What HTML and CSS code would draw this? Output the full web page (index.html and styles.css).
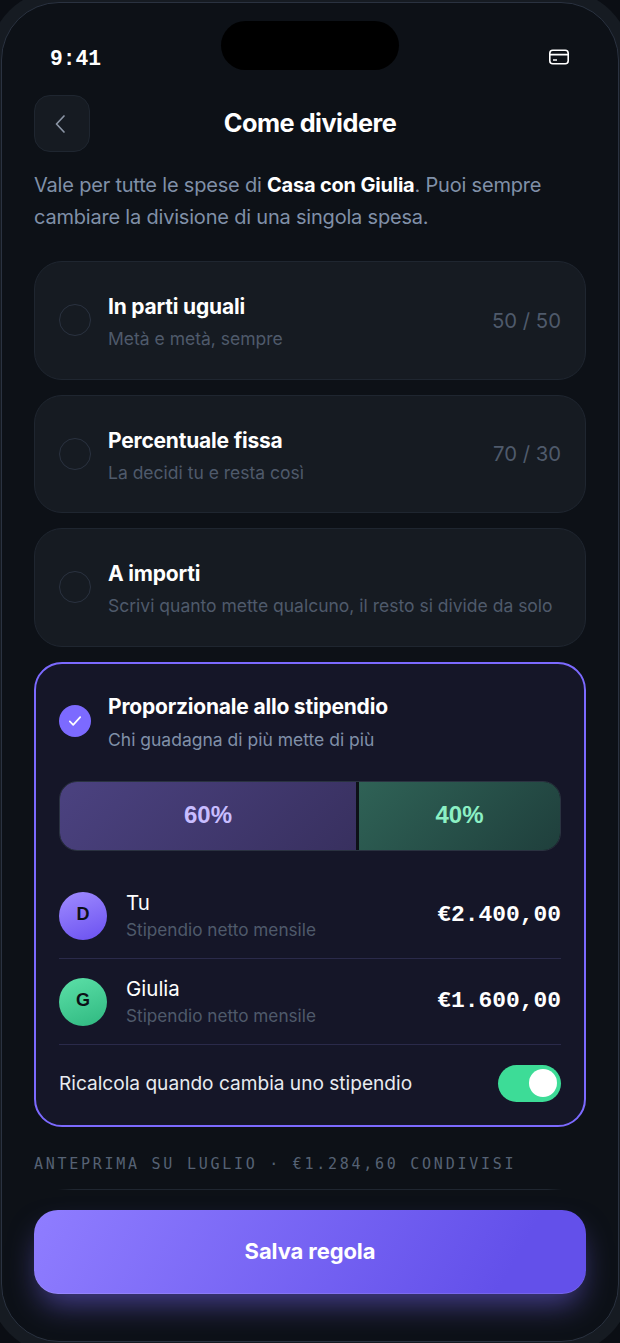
FILE: index.html
```html
<!DOCTYPE html>
<html lang="it">
    <head>
        <meta charset="utf-8">
        <title>Come dividere</title>
        <link rel="stylesheet" href="styles.css">
    </head>
    <body>
        <div class="screen">
            <div class="island"></div>
            <div class="status">
                <span class="time">9:41</span>
                <svg class="card-icon" width="22" height="16" viewBox="0 0 22 16" fill="none" stroke="#fff" stroke-width="1.6">
                    <rect x="1.8" y="1.3" width="18.4" height="13.4" rx="3"/>
                    <path d="M2 5.6h18"/>
                    <path d="M5 11h4"/>
                </svg>
            </div>
            <div class="nav">
                <div class="back">
                    <svg width="12" height="20" viewBox="0 0 12 20" fill="none" stroke="#8b95a5" stroke-width="1.7" stroke-linecap="round" stroke-linejoin="round"><path d="M10 2 2.5 10l7.5 8"/></svg>
                </div>
                <h1>Come dividere</h1>
            </div>
            <p class="intro">Vale per tutte le spese di <b>Casa con Giulia</b>. Puoi sempre cambiare la divisione di una singola spesa.</p>

            <div class="option">
                <span class="radio"></span>
                <div class="option-text">
                    <div class="option-title">In parti uguali</div>
                    <div class="option-sub">Metà e metà, sempre</div>
                </div>
                <span class="ratio">50 / 50</span>
            </div>
            <div class="option">
                <span class="radio"></span>
                <div class="option-text">
                    <div class="option-title">Percentuale fissa</div>
                    <div class="option-sub">La decidi tu e resta così</div>
                </div>
                <span class="ratio">70 / 30</span>
            </div>
            <div class="option">
                <span class="radio"></span>
                <div class="option-text">
                    <div class="option-title">A importi</div>
                    <div class="option-sub">Scrivi quanto mette qualcuno, il resto si divide da solo</div>
                </div>
            </div>

            <div class="selected">
                <div class="selected-head">
                    <span class="radio checked">
                        <svg width="14" height="12" viewBox="0 0 14 12" fill="none" stroke="#fff" stroke-width="1.7" stroke-linecap="round" stroke-linejoin="round"><path d="M1.8 6.4 5.2 9.8 12.2 2.2"/></svg>
                    </span>
                    <div class="option-text">
                        <div class="option-title">Proporzionale allo stipendio</div>
                        <div class="option-sub light">Chi guadagna di più mette di più</div>
                    </div>
                </div>
                <div class="split">
                    <div class="split-a">60%</div>
                    <div class="split-b">40%</div>
                </div>
                <div class="person">
                    <span class="avatar violet">D</span>
                    <div class="person-text">
                        <div class="person-name">Tu</div>
                        <div class="person-sub">Stipendio netto mensile</div>
                    </div>
                    <span class="amount">€2.400,00</span>
                </div>
                <div class="person">
                    <span class="avatar green">G</span>
                    <div class="person-text">
                        <div class="person-name">Giulia</div>
                        <div class="person-sub">Stipendio netto mensile</div>
                    </div>
                    <span class="amount">€1.600,00</span>
                </div>
                <div class="recalc">
                    <span>Ricalcola quando cambia uno stipendio</span>
                    <span class="toggle"><span class="knob"></span></span>
                </div>
            </div>

            <div class="preview">ANTEPRIMA SU LUGLIO · €1.284,60 CONDIVISI</div>
            <div class="preview-line"></div>
            <div class="save">Salva regola</div>
        </div>
    </body>
</html>
```

FILE: styles.css
```css
html, body {
    margin: 0;
    height: 100%;
    background-color: #0b0e14;
}
body {
    font-family: "Inter", "Noto Sans", sans-serif;
    overflow: hidden;
}
.screen {
    position: relative;
    box-sizing: border-box;
    width: 618px;
    height: 1340px;
    margin: 2px 1px 0;
    padding: 0 32px;
    border: 1px solid #2a3240;
    border-radius: 58px;
    background-color: #0d1117;
    box-shadow: 0 0 0 12px #161b22;
    overflow: hidden;
}
.island {
    position: absolute;
    top: 18px;
    left: 219px;
    width: 178px;
    height: 49px;
    border-radius: 25px;
    background-color: #000;
}
.status {
    display: flex;
    align-items: center;
    justify-content: space-between;
    height: 29px;
    padding: 41px 16px 0 16px;
}
.time {
    font-family: "Liberation Mono", monospace;
    font-weight: 700;
    font-size: 21.3px;
    color: #fff;
}
.card-icon {
    margin-bottom: 4px;
}
.nav {
    position: relative;
    display: flex;
    align-items: center;
    justify-content: center;
    height: 57px;
    margin-top: 22px;
}
.back {
    position: absolute;
    left: 0;
    top: 0;
    box-sizing: border-box;
    width: 56px;
    height: 57px;
    display: flex;
    align-items: center;
    justify-content: center;
    padding-right: 5px;
    border: 1px solid #1f2630;
    border-radius: 16px;
    background-color: #161b22;
}
h1 {
    margin: 0 0 2px;
    font-size: 25.3px;
    font-weight: 700;
    letter-spacing: -0.5px;
    color: #fff;
}
.intro {
    margin: 17px 0 28px;
    font-size: 20px;
    line-height: 32px;
    letter-spacing: -0.2px;
    color: #8090a8;
}
.intro b {
    color: #fff;
    font-weight: 700;
}
.option {
    box-sizing: border-box;
    display: flex;
    align-items: center;
    height: 118.5px;
    margin-bottom: 15px;
    padding: 0 24px;
    border: 1px solid #1f2630;
    border-radius: 28px;
    background-color: #161b22;
}
.radio {
    flex: none;
    box-sizing: border-box;
    width: 32px;
    height: 32px;
    margin-right: 17px;
    border: 1px solid #2a3240;
    border-radius: 50%;
}
.radio.checked {
    display: flex;
    align-items: center;
    justify-content: center;
    border: 0;
    background-color: #7c6aff;
}
.option-text {
    flex: 1;
    padding-top: 4px;
}
.option-title {
    font-size: 21px;
    line-height: 28px;
    font-weight: 700;
    letter-spacing: -0.2px;
    color: #fff;
}
.option-sub {
    margin-top: 6px;
    font-size: 17.5px;
    line-height: 24px;
    color: #4f5a6b;
}
.option-sub.light {
    margin-top: 7px;
    color: #8090a8;
}
.ratio {
    font-size: 20.3px;
    color: #4f5a6b;
}
.selected {
    box-sizing: border-box;
    height: 465.5px;
    padding: 26px 23px 0;
    border: 2px solid #7c6aff;
    border-radius: 28px;
    background-color: #151628;
}
.selected .option-text {
    padding-top: 3px;
}
.selected-head {
    display: flex;
    align-items: center;
}
.split {
    display: flex;
    box-sizing: border-box;
    height: 70px;
    margin-top: 29.5px;
    margin-bottom: 22px;
    border: 1px solid #2a3240;
    border-radius: 18px;
    background-color: #0d1117;
    overflow: hidden;
    font-family: "Liberation Sans", sans-serif;
    font-weight: 700;
    font-size: 24px;
}
.split-a, .split-b {
    display: flex;
    align-items: center;
    justify-content: center;
    padding-bottom: 2px;
}
.split-a {
    width: 296px;
    color: #c8bdff;
    background: linear-gradient(135deg, #4b4280, #38305f);
}
.split-b {
    flex: 1;
    margin-left: 3px;
    color: #8cf0c4;
    background: linear-gradient(135deg, #2f6256, #1f3f3c);
}
.person {
    box-sizing: border-box;
    display: flex;
    align-items: center;
    height: 86px;
    border-bottom: 1px solid #2a2a4a;
}
.avatar {
    flex: none;
    display: flex;
    align-items: center;
    justify-content: center;
    box-sizing: border-box;
    width: 48px;
    height: 48px;
    margin-right: 19px;
    padding-bottom: 3px;
    border-radius: 50%;
    font-family: "Liberation Sans", sans-serif;
    font-weight: 700;
    font-size: 18px;
    color: #0c1016;
}
.avatar.violet {
    background: linear-gradient(160deg, #a08cff, #6a50f0);
}
.avatar.green {
    background: linear-gradient(160deg, #5ce0a8, #2fb880);
}
.person-text {
    flex: 1;
    padding-bottom: 1px;
}
.person-name {
    margin-bottom: 2px;
    font-size: 20.5px;
    line-height: 27px;
    color: #fff;
}
.person-sub {
    font-size: 17.2px;
    line-height: 24px;
    color: #4f5a6b;
}
.amount {
    padding-bottom: 2px;
    font-family: "Liberation Mono", monospace;
    font-weight: 700;
    font-size: 22.9px;
    color: #fff;
}
.recalc {
    display: flex;
    align-items: center;
    justify-content: space-between;
    height: 76px;
    font-size: 19.1px;
    color: #e8ebf0;
}
.toggle {
    display: flex;
    justify-content: flex-end;
    align-items: center;
    box-sizing: border-box;
    width: 63px;
    height: 37px;
    padding: 0 4px;
    border-radius: 19px;
    background-color: #3ddc97;
}
.knob {
    width: 28px;
    height: 28px;
    border-radius: 50%;
    background-color: #fff;
}
.preview {
    margin-top: 28px;
    font-family: "DejaVu Sans Mono", monospace;
    font-size: 15px;
    letter-spacing: 2.73px;
    color: #566274;
    white-space: nowrap;
}
.preview-line {
    height: 1px;
    margin: 16px 24px 0;
    background: linear-gradient(90deg, transparent, #1f2630 3%, #1f2630 97%, transparent);
}
.save {
    position: absolute;
    left: 32px;
    right: 32px;
    bottom: 47px;
    height: 84px;
    display: flex;
    align-items: center;
    justify-content: center;
    padding-bottom: 2px;
    box-sizing: border-box;
    border-radius: 24px;
    background: linear-gradient(120deg, #8f7dff, #6350ea 85%);
    box-shadow: 0 16px 30px -6px rgba(124, 106, 255, 0.5), inset 0 -1px 0 rgba(255, 255, 255, 0.12);
    font-size: 22px;
    font-weight: 700;
    letter-spacing: -0.1px;
    color: #fff;
}
```
